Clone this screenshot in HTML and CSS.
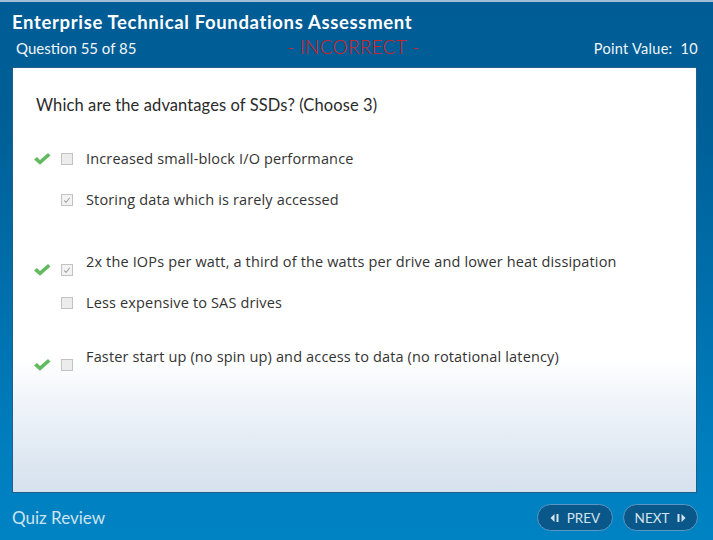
FILE: index.html
```html
<!DOCTYPE html>
<html>
<head>
<meta charset="utf-8">
<link rel="stylesheet" href="styles.css">
</head>
<body>
<div class="app">
  <header class="header">
    <div class="title">Enterprise Technical Foundations Assessment</div>
    <div class="subrow">
      <span class="qnum">Question 55 of 85</span>
      <span class="status">- INCORRECT -</span>
      <span class="points">Point Value:&nbsp; 10</span>
    </div>
  </header>
  <main class="panel">
    <div class="question">Which are the advantages of SSDs? (Choose 3)</div>
    <div class="opt r1">
      <span class="marks">
        <svg class="tick" viewBox="0 0 18 14" width="18" height="14"><path d="M1 7.5 L4 5 L7 8 L15 1 L17.5 3.5 L7 12.8 Z" fill="#62b95f"/></svg>
        <span class="box"></span>
      </span>
      <span class="text">Increased small-block I/O performance</span>
    </div>
    <div class="opt r2">
      <span class="marks">
        <span class="tick-space"></span>
        <span class="box checked"><svg viewBox="0 0 11 11" width="11" height="11"><path d="M2.5 5.5 L4.5 7.5 L8.5 2.5" stroke="#a8a8a8" stroke-width="1.2" fill="none"/></svg></span>
      </span>
      <span class="text">Storing data which is rarely accessed</span>
    </div>
    <div class="opt r3 low">
      <span class="marks">
        <svg class="tick" viewBox="0 0 18 14" width="18" height="14"><path d="M1 7.5 L4 5 L7 8 L15 1 L17.5 3.5 L7 12.8 Z" fill="#62b95f"/></svg>
        <span class="box checked"><svg viewBox="0 0 11 11" width="11" height="11"><path d="M2.5 5.5 L4.5 7.5 L8.5 2.5" stroke="#a8a8a8" stroke-width="1.2" fill="none"/></svg></span>
      </span>
      <span class="text">2x the IOPs per watt, a third of the watts per drive and lower heat dissipation</span>
    </div>
    <div class="opt r4">
      <span class="marks">
        <span class="tick-space"></span>
        <span class="box"></span>
      </span>
      <span class="text">Less expensive to SAS drives</span>
    </div>
    <div class="opt r5 low">
      <span class="marks">
        <svg class="tick" viewBox="0 0 18 14" width="18" height="14"><path d="M1 7.5 L4 5 L7 8 L15 1 L17.5 3.5 L7 12.8 Z" fill="#62b95f"/></svg>
        <span class="box"></span>
      </span>
      <span class="text">Faster start up (no spin up) and access to data (no rotational latency)</span>
    </div>
  </main>
  <footer class="footer">
    <span class="review">Quiz Review</span>
    <div class="nav">
      <button class="btn prev"><svg viewBox="0 0 10 10" width="10" height="10"><path d="M0.5 5 L4.5 1 L4.5 9 Z" fill="#d4e4ef"/><rect x="6.5" y="1" width="2" height="8" fill="#d4e4ef"/></svg>PREV</button>
      <button class="btn next">NEXT<svg viewBox="0 0 10 10" width="10" height="10"><rect x="1.5" y="1" width="2" height="8" fill="#d4e4ef"/><path d="M5.5 1 L9.5 5 L5.5 9 Z" fill="#d4e4ef"/></svg></button>
    </div>
  </footer>
</div>
</body>
</html>
```

FILE: styles.css
```css
* { box-sizing: border-box; }
html, body { margin: 0; padding: 0; }
body {
  width: 713px;
  height: 540px;
  overflow: hidden;
  font-family: "Open Sans", "Liberation Sans", sans-serif;
}
.app {
  width: 713px;
  height: 540px;
  display: flex;
  flex-direction: column;
  border-top: 2px solid #9fbfd6;
  background: linear-gradient(to bottom, #005c94 0px, #005f97 120px, #0070ad 300px, #007fbf 460px, #0083c3 540px);
}
.header {
  height: 65px;
  padding: 0 15px 0 12px;
  color: #fff;
  font-family: Lato, "Open Sans", sans-serif;
}
.title {
  font-size: 18.5px;
  font-weight: 700;
  line-height: 22px;
  padding-top: 9px;
  letter-spacing: 0.65px;
}
.subrow {
  display: flex;
  align-items: center;
  height: 24px;
  margin-top: 1px;
}
.qnum {
  font-size: 15px;
  padding-left: 4px;
  color: #f2f6fa;
  width: 275px;
  padding-top: 4px;
}
.status {
  color: #e01b1b;
  font-size: 19px;
  font-weight: 300;
  letter-spacing: 0.3px;
  flex: 1;
}
.points {
  font-size: 14.5px;
  color: #f2f6fa;
  letter-spacing: 0.3px;
  padding-top: 4px;
}
.panel {
  margin: 0 16px 0 12px;
  height: 426px;
  border: 1px solid #1e5d8c;
  background: linear-gradient(to bottom, #ffffff 0px, #ffffff 290px, #eef3f9 340px, #dfe8f2 390px, #d5e1ee 426px);
  padding: 27px 0 0 23px;
  color: #2a2a2a;
}
.question {
  font-size: 16.5px;
  line-height: 20px;
  font-family: Lato, "Open Sans", sans-serif;
  letter-spacing: 0.1px;
}
.opt {
  display: flex;
  align-items: center;
  height: 20px;
  font-size: 14.5px;
  letter-spacing: 0.15px;
  color: #333;
}
.opt.low { align-items: flex-start; height: 28px; }
.opt.low .marks { padding-top: 11px; }
.marks {
  display: flex;
  align-items: center;
  width: 50px;
  flex: none;
}
.tick { margin-left: -3px; margin-right: 10px; flex: none; }
.tick-space { width: 25px; flex: none; }
.box {
  width: 12px;
  height: 12px;
  border: 1px solid #c2c2c2;
  background: #ececec;
  display: flex;
}
.box.checked { background: #f2f2f2; }
.text { line-height: 20px; white-space: nowrap; }
.r1 { margin-top: 34px; }
.r2 { margin-top: 21px; }
.r3 { margin-top: 42px; }
.r4 { margin-top: 13px; }
.r5 { margin-top: 34px; }
.footer {
  flex: 1;
  display: flex;
  align-items: center;
  justify-content: space-between;
  padding: 2px 15px 0 12px;
}
.review {
  font-family: Lato, "Open Sans", sans-serif;
  font-size: 17px;
  color: #cfe2ef;
}
.nav { display: flex; gap: 10px; }
.btn {
  height: 27px;
  border-radius: 14px;
  border: 1px solid #5b97c4;
  background: #0a5789;
  color: #d4e4ef;
  font-family: Lato, "Open Sans", sans-serif;
  font-size: 13.5px;
  display: flex;
  align-items: center;
  justify-content: center;
  gap: 7px;
  padding: 0;
}
.prev { width: 76px; }
.next { width: 75px; }
```
